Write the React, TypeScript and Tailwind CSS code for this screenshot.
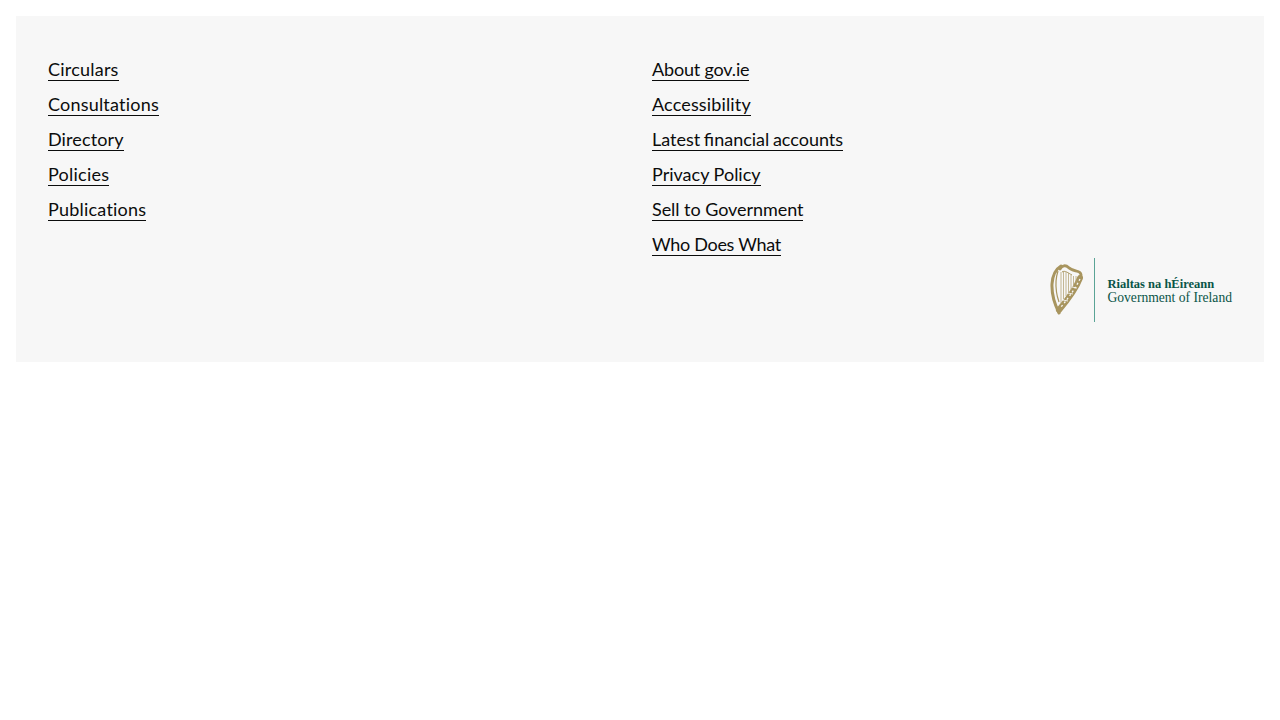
const left = [
  { t: "Circulars", c: "tracking-[0.22px]" },
  { t: "Consultations", c: "tracking-[0.2px]" },
  { t: "Directory", c: "tracking-[0.11px]" },
  { t: "Policies", c: "tracking-[0.25px]" },
  { t: "Publications", c: "tracking-[0.22px]" },
];
const right = [
  { t: "About gov.ie", c: "tracking-[-0.17px]" },
  { t: "Accessibility", c: "tracking-[0.15px]" },
  { t: "Latest financial accounts", c: "[word-spacing:-1px]" },
  { t: "Privacy Policy", c: "" },
  { t: "Sell to Government", c: "tracking-[-0.05px]" },
  { t: "Who Does What", c: "tracking-[-0.3px]" },
];

function Harp() {
  return (
    <svg width="34" height="54" viewBox="0 0 34 54" fill="none" className="mr-[10px]">
      <path d="M11 3C6 6 2.500 13 2 21C1.600 30 4 40 9 50" stroke="#a8955f" strokeWidth="3" strokeLinecap="round" />
      <path d="M8 8C6 14 5.500 22 6.500 29C7 33 8 36 9 39" stroke="#a8955f" strokeWidth="1.200" />
      <path d="M10 6C12 2 16 2 18.500 4.500C21 7 25 7.500 28 8.500C30 9.200 31.500 11 31 14" stroke="#a8955f" strokeWidth="2.800" strokeLinecap="round" />
      <path d="M12 9C15 7 18 10 22 12" stroke="#a8955f" strokeWidth="1" />
      <path d="M30 15C27 23 20 34 9 47" stroke="#a8955f" strokeWidth="6" strokeLinecap="round" />
      <path d="M30 16C26 24 20 33 11 44" stroke="#f7f7f7" strokeWidth="1.300" strokeDasharray="2 2.500" />
      <path d="M27 25L22 24M23 31L18 30M18 38L13 37" stroke="#f7f7f7" strokeWidth="0.900" />
      <path d="M11 9V40M13.500 9V36M16 9V33M18.500 10V30M21 12V27M23.500 13V24M26 13V20" stroke="#b5a478" strokeWidth="0.800" />
    </svg>
  );
}

function Logo() {
  return (
    <div className="flex items-center h-16">
      <Harp />
      <div className="w-px h-16 bg-[#5aa496] mr-3" />
      <div className="flex flex-col pt-[2px] font-['Liberation_Serif',serif] text-[#0a5548] leading-[14px]">
        <span className="text-[12.500px] font-bold">Rialtas na hÉireann</span>
        <span className="text-[13.600px]">Government of Ireland</span>
      </div>
    </div>
  );
}

function LinkList({ items }: { items: { t: string; c: string }[] }) {
  return (
    <ul className="flex flex-col">
      {items.map(({ t, c }) => (
        <li key={t} className="h-[35px] leading-[37px]">
          <a href="#" className={`text-[#0b0c0c] text-[18px] border-b border-[#0b0c0c] ${c}`}>{t}</a>
        </li>
      ))}
    </ul>
  );
}

export default function App() {
  return (
    <div className="p-4 bg-white min-h-[720px] font-['Lato',sans-serif]">
      <footer className="bg-[#f7f7f7] px-8 pt-[35px] pb-[40px]">
        <div className="flex">
          <div className="w-[604px]"><LinkList items={left} /></div>
          <div className="flex-1"><LinkList items={right} /></div>
        </div>
        <div className="flex justify-end -mt-[3px]"><Logo /></div>
      </footer>
    </div>
  );
}
